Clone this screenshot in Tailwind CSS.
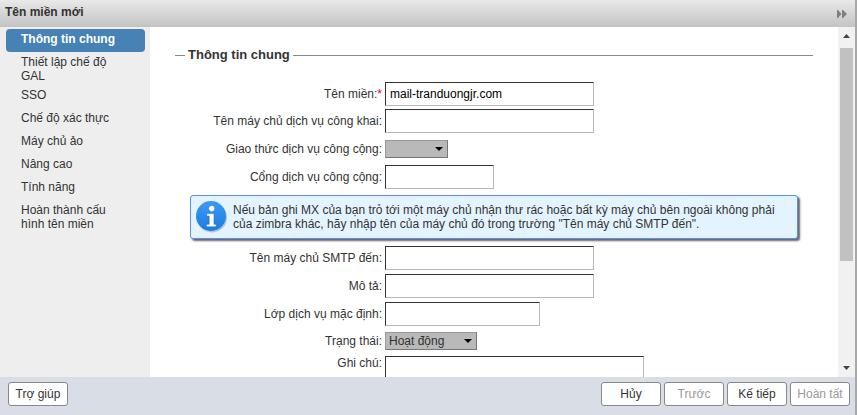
<!DOCTYPE html>
<html lang="vi">
<head>
<meta charset="utf-8">
<meta name="viewport" content="width=device-width, initial-scale=1">
<title>Tên miền mới</title>
<script src="https://cdn.jsdelivr.net/npm/@tailwindcss/browser@4"></script>
</head>
<body class="flex h-screen flex-col overflow-hidden border-r-2 border-[#a8a8a8] bg-white font-['Liberation_Sans',Arial,sans-serif] text-[12px] leading-[14px] text-[#333]">

<header class="flex h-[27px] shrink-0 items-start justify-between bg-linear-to-b from-[#e9e9e9] to-[#c3c3c3] pt-[5px] pr-2 pl-[5px]">
  <h1 class="font-bold">Tên miền mới</h1>
  <button type="button" aria-label="Thu gọn" class="mt-[5px]">
    <svg class="block h-2 w-[10px]" viewBox="0 0 10 8" fill="#808080"><path d="M0 0h1l3.500 4L1 8H0zM5 0h1l4 4-4 4H5z"/></svg>
  </button>
</header>

<div class="flex min-h-0 flex-1">
  <nav class="w-[150px] shrink-0 bg-[#eee] pt-[2px] pr-[5px] pl-[6px]">
    <ul>
      <li><a href="#" aria-current="step" class="block min-h-[23px] rounded-[4px] bg-[#4682b4] pt-[3px] pr-5 pb-[2px] pl-[15px] font-bold text-white">Thông tin chung</a></li>
      <li><a href="#" class="block min-h-[23px] pt-[3px] pr-5 pb-[2px] pl-[15px]">Thiết lập chế độ GAL</a></li>
      <li><a href="#" class="block min-h-[23px] pt-[3px] pr-5 pb-[2px] pl-[15px]">SSO</a></li>
      <li><a href="#" class="block min-h-[23px] pt-[3px] pr-5 pb-[2px] pl-[15px]">Chế độ xác thực</a></li>
      <li><a href="#" class="block min-h-[23px] pt-[3px] pr-5 pb-[2px] pl-[15px]">Máy chủ ảo</a></li>
      <li><a href="#" class="block min-h-[23px] pt-[3px] pr-5 pb-[2px] pl-[15px]">Nâng cao</a></li>
      <li><a href="#" class="block min-h-[23px] pt-[3px] pr-5 pb-[2px] pl-[15px]">Tính năng</a></li>
      <li><a href="#" class="block min-h-[23px] pt-[3px] pr-5 pb-[2px] pl-[15px]">Hoàn thành cấu hình tên miền</a></li>
    </ul>
  </nav>

  <main class="min-w-0 flex-1 overflow-hidden pt-5 pr-[25px] pl-[25px]">
    <fieldset class="border-t border-[#888]">
      <legend class="ml-[10px] px-[3px] text-[13px] leading-4 font-bold">Thông tin chung</legend>

      <div class="flex flex-col gap-[3px] pt-[19px]">
        <div class="grid grid-cols-[207px_1fr] items-center gap-x-[3px]">
          <label for="domain" class="text-right">Tên miền:<span class="text-red-600">*</span></label>
          <input id="domain" type="text" value="mail-tranduongjr.com" class="h-6 w-[209px] border border-t-[#333] border-r-[#b8b8b8] border-b-[#b8b8b8] border-l-[#333] bg-white px-1 text-black">
        </div>
        <div class="grid grid-cols-[207px_1fr] items-center gap-x-[3px]">
          <label for="public-host" class="text-right">Tên máy chủ dịch vụ công khai:</label>
          <input id="public-host" type="text" class="h-6 w-[209px] border border-t-[#333] border-r-[#b8b8b8] border-b-[#b8b8b8] border-l-[#333] bg-white px-1 text-black">
        </div>
        <div class="grid h-[26px] grid-cols-[207px_1fr] items-center gap-x-[3px]">
          <label for="protocol" class="text-right">Giao thức dịch vụ công cộng:</label>
          <div class="relative w-[63px]">
            <select id="protocol" class="block h-[18px] w-full appearance-none border border-t-[#999] border-r-[#777] border-b-[#777] border-l-[#999] bg-[#b9b9b9] pl-[3px]"><option></option><option>http</option><option>https</option></select>
            <svg class="pointer-events-none absolute top-[7px] right-[5px] h-1 w-2" viewBox="0 0 8 4" fill="#000"><path d="M0 0h8L4 4z"/></svg>
          </div>
        </div>
        <div class="grid grid-cols-[207px_1fr] items-center gap-x-[3px]">
          <label for="port" class="text-right">Cổng dịch vụ công cộng:</label>
          <input id="port" type="text" class="h-6 w-[109px] border border-t-[#333] border-r-[#b8b8b8] border-b-[#b8b8b8] border-l-[#333] bg-white px-1 text-black">
        </div>
      </div>

      <div class="mt-[6px] mr-[15px] mb-[7px] ml-[15px] flex h-11 items-center gap-[5px] rounded-[3px] border border-[#5b8fea] bg-[#e3f3ff] pl-[5px] shadow-[2px_2px_2px_#666]">
        <svg class="h-8 w-8 shrink-0" viewBox="0 0 32 32">
          <defs><linearGradient id="disc" x1="0" y1="0" x2="0" y2="1"><stop offset="0" stop-color="#3b9af3"/><stop offset="1" stop-color="#1b7ce0"/></linearGradient></defs>
          <circle cx="16" cy="16.500" r="15" fill="#8aa3bd" opacity=".6"/>
          <circle cx="15" cy="15" r="15" fill="url(#disc)"/>
          <g fill="#fff" stroke="#1566b8" stroke-width=".5"><circle cx="15.700" cy="7.600" r="3.100"/><path d="M10.700 12.600h7.300v10.700h2.200v2.500h-9.700v-2.500h2.700v-8.200h-2.500z"/></g>
        </svg>
        <p class="min-w-0">Nếu bản ghi MX của bạn trỏ tới một máy chủ nhận thư rác hoặc bất kỳ máy chủ bên ngoài không phải của zimbra khác, hãy nhập tên của máy chủ đó trong trường "Tên máy chủ SMTP đến".</p>
      </div>

      <div class="flex flex-col gap-1">
        <div class="grid grid-cols-[207px_1fr] items-center gap-x-[3px]">
          <label for="smtp" class="text-right">Tên máy chủ SMTP đến:</label>
          <input id="smtp" type="text" class="h-6 w-[209px] border border-t-[#333] border-r-[#b8b8b8] border-b-[#b8b8b8] border-l-[#333] bg-white px-1 text-black">
        </div>
        <div class="grid grid-cols-[207px_1fr] items-center gap-x-[3px]">
          <label for="description" class="text-right">Mô tả:</label>
          <input id="description" type="text" class="h-6 w-[209px] border border-t-[#333] border-r-[#b8b8b8] border-b-[#b8b8b8] border-l-[#333] bg-white px-1 text-black">
        </div>
        <div class="grid grid-cols-[207px_1fr] items-center gap-x-[3px]">
          <label for="cos" class="text-right">Lớp dịch vụ mặc định:</label>
          <input id="cos" type="text" class="h-6 w-[155px] border border-t-[#333] border-r-[#b8b8b8] border-b-[#b8b8b8] border-l-[#333] bg-white px-1 text-black">
        </div>
        <div class="grid h-[22px] grid-cols-[207px_1fr] items-center gap-x-[3px]">
          <label for="status" class="text-right">Trạng thái:</label>
          <div class="relative w-[92px]">
            <select id="status" class="block h-[18px] w-full appearance-none border border-t-[#999] border-r-[#777] border-b-[#777] border-l-[#999] bg-[#b9b9b9] pl-[3px]"><option>Hoạt động</option><option>Đóng</option></select>
            <svg class="pointer-events-none absolute top-[7px] right-[5px] h-1 w-2" viewBox="0 0 8 4" fill="#000"><path d="M0 0h8L4 4z"/></svg>
          </div>
        </div>
        <div class="grid grid-cols-[207px_1fr] items-start gap-x-[3px]">
          <label for="notes" class="text-right">Ghi chú:</label>
          <textarea id="notes" rows="4" class="w-[259px] resize-none border border-t-[#333] border-r-[#b8b8b8] border-b-[#b8b8b8] border-l-[#333] bg-white px-1 text-black"></textarea>
        </div>
      </div>
    </fieldset>
  </main>

  <div aria-hidden="true" class="flex w-[17px] shrink-0 flex-col items-center justify-between bg-[#f1f1f1] pt-[7px] pb-[7px]">
    <svg class="h-1 w-[7px] shrink-0" viewBox="0 0 7 4" fill="#444"><path d="M0 4h7L3.500 0z"/></svg>
    <div class="mt-[10px] flex w-[13px] flex-1 flex-col"><div class="h-[67%] bg-[#c1c1c1]"></div></div>
    <svg class="h-1 w-[7px] shrink-0" viewBox="0 0 7 4" fill="#444"><path d="M0 0h7L3.500 4z"/></svg>
  </div>
</div>

<footer class="flex h-[38px] shrink-0 items-start justify-between bg-[#d9dde6] pt-[5px] pr-[5px] pl-2">
  <button type="button" class="h-6 w-[60px] rounded-[3px] border border-[#888] bg-white">Trợ giúp</button>
  <div class="flex gap-[3px]">
    <button type="button" class="h-6 w-[60px] rounded-[3px] border border-[#888] bg-white">Hủy</button>
    <button type="button" disabled class="h-6 w-[60px] rounded-[3px] border border-[#888] bg-white text-[#999]">Trước</button>
    <button type="button" class="h-6 w-[60px] rounded-[3px] border border-[#888] bg-white">Kế tiếp</button>
    <button type="button" disabled class="h-6 w-[60px] rounded-[3px] border border-[#888] bg-white text-[#999]">Hoàn tất</button>
  </div>
</footer>
</body>
</html>
